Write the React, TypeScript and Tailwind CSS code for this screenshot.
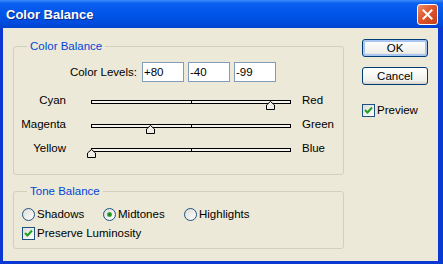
import React from "react";

const FONT = "font-['Liberation_Sans',Arial,sans-serif]";

const sliders = [
  { left: "Cyan", right: "Red", value: 80 },
  { left: "Magenta", right: "Green", value: -40 },
  { left: "Yellow", right: "Blue", value: -99 },
];

function CheckBox({ checked }: { checked: boolean }) {
  return (
    <span className="flex h-[13px] w-[13px] shrink-0 items-center justify-center border border-[#1c5180] bg-[linear-gradient(135deg,#dcdcd7,#ffffff)]">
      {checked && (
        <svg width="9" height="9" viewBox="0 0 9 9">
          <polyline points="1,4 3.5,6.5 8,1.5" fill="none" stroke="#21a121" strokeWidth="2" />
        </svg>
      )}
    </span>
  );
}

function Radio({ checked }: { checked: boolean }) {
  return (
    <span className="flex h-[13px] w-[13px] shrink-0 items-center justify-center rounded-full border border-[#1c5180] bg-[linear-gradient(135deg,#dcdcd7,#ffffff)]">
      {checked && (
        <span className="h-[5px] w-[5px] rounded-full bg-[radial-gradient(circle,#1b8f1b_30%,#6ed26e_100%)]" />
      )}
    </span>
  );
}

function Slider({ value }: { value: number }) {
  // thumb centre sits at 99.5px + value across the 200px track
  return (
    <div className="relative ml-[25px] h-[24px] w-[200px]">
      <div className="relative mt-[11px] h-[4px] border border-black bg-[#f4f3ee]">
        <span className="absolute left-[99px] top-0 h-full w-px bg-black" />
      </div>
      <svg
        className="absolute top-[12px]"
        style={{ left: 95 + value }}
        width="9"
        height="9"
        viewBox="0 0 9 9"
      >
        <polygon points="4.5,0.5 8.5,4 8.5,8.5 0.5,8.5 0.5,4" fill="#eeede6" stroke="#000" strokeWidth="1" />
      </svg>
    </div>
  );
}

function XpButton({ label, isDefault }: { label: string; isDefault?: boolean }) {
  return (
    <button
      type="button"
      className={`flex h-[18px] w-[66px] items-center justify-center rounded-[3px] border border-[#003c74] bg-[linear-gradient(#ffffff,#f0efea_80%,#d6d0c5)] text-[11.5px] leading-[13px] text-black ${
        isDefault ? "shadow-[inset_0_0_0_2px_#a9c6f2]" : ""
      }`}
    >
      {label}
    </button>
  );
}

export default function App() {
  return (
    <div className={`flex h-[264px] w-[443px] flex-col bg-[#0b37d3] ${FONT} text-[11.5px] leading-[13px] text-black`}>
      {/* Title bar */}
      <div className="flex h-[28px] shrink-0 items-start justify-between bg-[linear-gradient(#3b8cfb_0%,#0a5ef0_12%,#0055e8_50%,#004bdc_85%,#0042cc_100%)]">
        <span className="pl-[6px] pt-[7px] text-[13px] font-bold leading-[16px] text-white [text-shadow:1px_1px_0_#0c2a8c]">
          Color Balance
        </span>
        <span className="mr-[5px] mt-[4px] flex h-[21px] w-[21px] items-center justify-center rounded-[3px] border border-white bg-[linear-gradient(135deg,#ef8c6a,#e0562b_45%,#c4401a)]">
          <svg width="11" height="11" viewBox="0 0 11 11">
            <path d="M1.5 1.5 L9.5 9.5 M9.5 1.5 L1.5 9.5" stroke="#fff" strokeWidth="2" strokeLinecap="square" />
          </svg>
        </span>
      </div>

      {/* Client area */}
      <div className="mb-[3px] ml-[3px] mr-[5px] flex flex-1 bg-[#ece9d8]">
        <div className="ml-[10px] w-[331px]">
          <fieldset className="mt-[12px] rounded-[3px] border border-[#d0d0bf] p-0">
            <legend className="ml-[13px] px-[3px] leading-[13px] text-[#0046d5]">Color Balance</legend>
            <div className="pb-[13px] pt-[9px]">
              <div className="flex h-[20px] items-center">
                <span className="w-[123px] text-right">Color Levels:</span>
                <div className="ml-[5px] flex gap-[4px]">
                  {["+80", "-40", "-99"].map((v) => (
                    <input
                      key={v}
                      readOnly
                      value={v}
                      className="h-[20px] w-[42px] border border-[#7f9db9] bg-white pl-[1px] text-[11.5px] leading-[13px] outline-none"
                    />
                  ))}
                </div>
              </div>
              <div className="mt-[7px]">
                {sliders.map((s) => (
                  <div key={s.left} className="flex h-[24px] items-start">
                    <span className="mt-[5px] w-[52px] text-right">{s.left}</span>
                    <Slider value={s.value} />
                    <span className="ml-[11px] mt-[5px]">{s.right}</span>
                  </div>
                ))}
              </div>
            </div>
          </fieldset>

          <fieldset className="mt-[10px] rounded-[3px] border border-[#d0d0bf] p-0">
            <legend className="ml-[13px] px-[3px] leading-[13px] text-[#0046d5]">Tone Balance</legend>
            <div className="pb-[5px] pl-[8px] pt-[7px]">
              <div className="flex h-[19px] items-center">
                {[
                  { label: "Shadows", on: false },
                  { label: "Midtones", on: true },
                  { label: "Highlights", on: false },
                ].map((r) => (
                  <div key={r.label} className="flex w-[81px] items-center gap-[2px]">
                    <Radio checked={r.on} />
                    <span>{r.label}</span>
                  </div>
                ))}
              </div>
              <div className="flex h-[19px] items-center gap-[2px]">
                <CheckBox checked />
                <span>Preserve Luminosity</span>
              </div>
            </div>
          </fieldset>
        </div>

        <div className="ml-[18px] flex flex-col pt-[11px]">
          <XpButton label="OK" isDefault />
          <div className="mt-[10px]">
            <XpButton label="Cancel" />
          </div>
          <div className="mt-[19px] flex items-center gap-[2px]">
            <CheckBox checked />
            <span>Preview</span>
          </div>
        </div>
      </div>
    </div>
  );
}
